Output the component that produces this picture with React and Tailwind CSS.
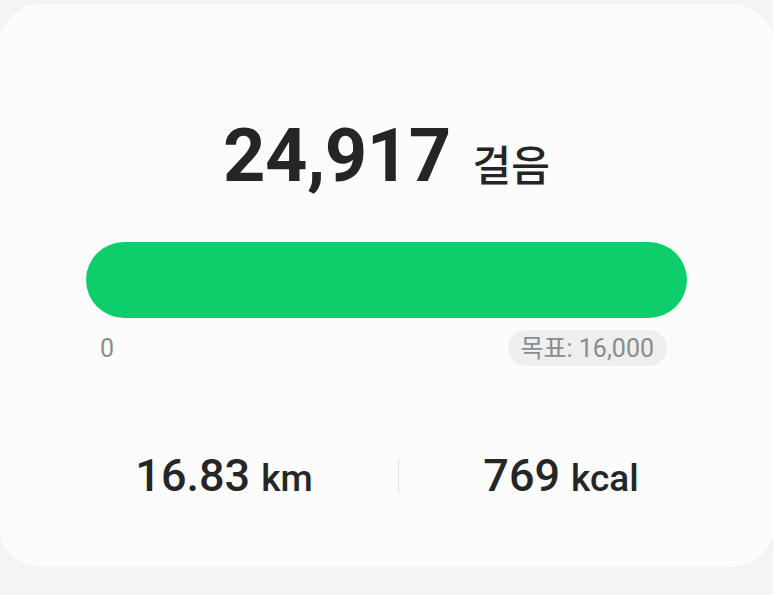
export default function App() {
  return (
    <div className="w-[773px] h-[595px] overflow-hidden bg-[#f4f4f4] font-['Roboto','Noto_Sans_CJK_KR',sans-serif]">
      <div className="mt-[4px] ml-[-2px] w-[777px] h-[563px] rounded-[44px] bg-[#fcfcfc] pt-[115px]">

        {/* Steps */}
        <div className="flex items-baseline justify-center gap-[22px] leading-none text-[#252525]">
          <span className="text-[74px] font-bold tracking-[-0.5px]">24,917</span>
          <span className="text-[42px] font-medium font-['Noto_Sans_CJK_KR',sans-serif]">걸음</span>
        </div>

        {/* Progress */}
        <div className="mt-[49px] ml-[88px] w-[601px]">
          <div className="h-[76px] rounded-full bg-[#0dce6b]" />
          <div className="mt-[12px] flex items-center justify-between">
            <span className="ml-[14px] text-[25px] leading-none text-[#8c8c8c]">0</span>
            <span className="mr-[20px] flex h-[36px] items-center rounded-full bg-[#efefef] px-[13px] text-[25px] leading-none text-[#8c8c8c]">
              목표: 16,000
            </span>
          </div>
        </div>

        {/* Distance / calories */}
        <div className="mt-[87px] ml-[52px] flex items-center text-[#262626]">
          <div className="w-[348px] flex items-baseline justify-center gap-[11px] leading-none">
            <span className="text-[45px] font-medium">16.83</span>
            <span className="text-[37px] font-medium">km</span>
          </div>
          <div className="w-px h-[34px] bg-[#e2e2e2]" />
          <div className="w-[324px] flex items-baseline justify-center gap-[11px] leading-none">
            <span className="text-[45px] font-medium">769</span>
            <span className="text-[37px] font-medium">kcal</span>
          </div>
        </div>
      </div>
    </div>
  )
}
